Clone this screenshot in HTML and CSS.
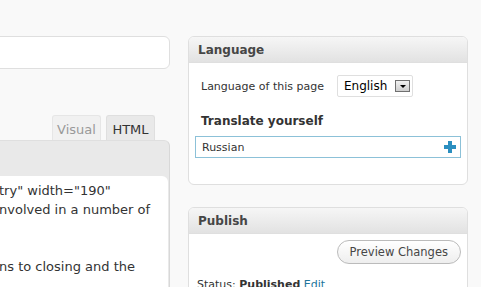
FILE: index.html
```html
<!DOCTYPE html>
<html lang="en">

<head>
    <meta charset="UTF-8">
    <meta name="viewport" content="width=device-width, initial-scale=1.0">
    <title>Edit Page</title>
    <link rel="stylesheet" href="styles.css">
</head>

<body>
    <div class="wrap">
        <!-- main column: title + editor -->
        <div class="main">
            <div class="title-box"></div>

            <div class="editor-tabs">
                <span class="tab">Visual</span>
                <span class="tab active">HTML</span>
            </div>
            <div class="editor">
                <div class="editor-toolbar"></div>
                <div class="editor-text">
                    <div class="line">try" width="190"</div>
                    <div class="line">nvolved in a number of</div>
                    <div class="line">&nbsp;</div>
                    <div class="line">&nbsp;</div>
                    <div class="line">ns to closing and the</div>
                </div>
            </div>
        </div>

        <!-- side column: meta boxes -->
        <div class="side">
            <div class="postbox">
                <h3>Language</h3>
                <div class="inside">
                    <div class="lang-row">
                        <label>Language of this page</label>
                        <div class="select">
                            <span>English</span>
                            <span class="select-btn"></span>
                        </div>
                    </div>
                    <h4>Translate yourself</h4>
                    <div class="translate-input">
                        <span>Russian</span>
                        <svg class="plus" width="12" height="12" viewBox="0 0 12 12">
                            <path d="M4 0h4v4h4v4h-4v4h-4v-4h-4v-4h4z" fill="#2b8fc0" />
                        </svg>
                    </div>
                </div>
            </div>

            <div class="postbox">
                <h3>Publish</h3>
                <div class="inside">
                    <div class="preview-row">
                        <button class="button">Preview Changes</button>
                    </div>
                    <div class="status">Status: <b>Published</b> <a href="#">Edit</a></div>
                </div>
            </div>
        </div>
    </div>
</body>

</html>
```

FILE: styles.css
```css
body {
    margin: 0;
    padding: 0;
    background-color: #f9f9f9;
    font-family: "DejaVu Sans", Verdana, sans-serif;
    font-size: 11px;
    color: #333;
    overflow: hidden;
}

.wrap {
    display: flex;
    gap: 18px;
    padding-top: 36px;
}

/* 左カラム */
.main {
    width: 190px;
    margin-left: -20px;
    display: flex;
    flex-direction: column;
}

.title-box {
    height: 31px;
    background-color: #fff;
    border: 1px solid #dfdfdf;
    border-radius: 6px;
}

.editor-tabs {
    display: flex;
    justify-content: flex-end;
    gap: 5px;
    margin-top: 46px;
    margin-right: 15px;
}

.tab {
    width: 47px;
    height: 23px;
    padding-top: 1px;
    font-size: 13px;
    line-height: 25px;
    text-align: center;
    color: #999;
    background-color: #f1f1f1;
    border: 1px solid #e6e6e6;
    border-bottom: none;
    border-radius: 3px 3px 0 0;
}

.tab.active {
    color: #333;
    background-color: #e9e9e9;
    border-color: #dfdfdf;
}

.editor {
    background-color: #e9e9e9;
    border: 1px solid #dfdfdf;
    border-right-color: #d8d8d8;
    border-radius: 0 6px 0 0;
    padding-right: 1px;
}

.editor-toolbar {
    height: 35px;
}

.editor-text {
    background-color: #fff;
    border-radius: 0 6px 0 0;
    padding: 5px 0 20px 18px;
    font-size: 13px;
    line-height: 19px;
    color: #333;
    white-space: nowrap;
}

/* 右カラム */
.side {
    width: 280px;
    display: flex;
    flex-direction: column;
    gap: 22px;
}

.postbox {
    background-color: #fff;
    border: 1px solid #dfdfdf;
    border-radius: 6px;
    overflow: hidden;
}

.postbox h3 {
    margin: 0;
    height: 25px;
    padding: 0 9px;
    font-size: 12px;
    line-height: 26px;
    color: #464646;
    background: linear-gradient(#f6f6f6, #e2e2e2);
    border-bottom: 1px solid #dfdfdf;
}

.inside {
    padding: 12px 6px 26px 6px;
}

.lang-row {
    display: flex;
    align-items: center;
    gap: 13px;
    padding-left: 6px;
}

.select {
    display: flex;
    align-items: center;
    justify-content: space-between;
    width: 66px;
    height: 20px;
    padding: 0 2px 0 6px;
    border: 1px solid #dfdfdf;
    border-radius: 2px;
    font-size: 12px;
    color: #000;
}

.select-btn {
    position: relative;
    width: 13px;
    height: 10px;
    background: linear-gradient(#f2f2f2, #cfcfcf);
    border: 1px solid #707070;
}

.select-btn::after {
    content: "";
    position: absolute;
    left: 4px;
    top: 4px;
    border-left: 3px solid transparent;
    border-right: 3px solid transparent;
    border-top: 3px solid #000;
}

.postbox h4 {
    margin: 17px 0 0 0;
    padding-left: 6px;
    font-size: 12px;
    line-height: 14px;
    color: #333;
}

.translate-input {
    display: flex;
    align-items: center;
    justify-content: space-between;
    height: 20px;
    margin-top: 8px;
    padding: 0 4px 0 6px;
    border: 1px solid #8cc1d8;
}

.preview-row {
    display: flex;
    justify-content: flex-end;
    margin-top: -6px;
}

.button {
    height: 24px;
    padding: 0 12px;
    font-family: "DejaVu Sans", Verdana, sans-serif;
    font-size: 11.5px;
    color: #464646;
    background: linear-gradient(#ffffff, #eeeeee);
    border: 1px solid #bbb;
    border-radius: 12px;
}

.status {
    margin-top: 14px;
    padding-left: 2px;
}

.status a {
    color: #21759b;
    text-decoration: none;
}
```
